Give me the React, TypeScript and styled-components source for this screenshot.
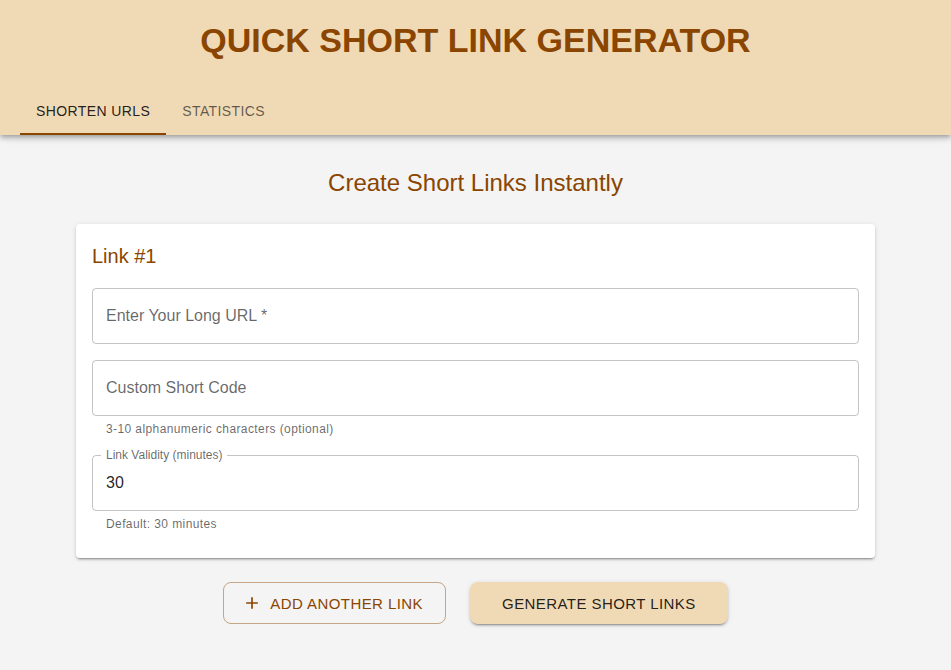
import React from "react";
import styled, { createGlobalStyle } from "styled-components";

const GlobalStyle = createGlobalStyle`
  * { box-sizing: border-box; }
  html, body { margin: 0; padding: 0; }
  body {
    background: #f4f4f4;
    font-family: "Liberation Sans", Arial, Helvetica, sans-serif;
    color: rgba(0,0,0,0.87);
  }
`;

const BROWN = "#8a4500";
const SAND = "#f0d9b5";

const Header = styled.header`
  background: ${SAND};
  box-shadow: 0px 2px 4px -1px rgba(0,0,0,0.2), 0px 4px 5px 0px rgba(0,0,0,0.14), 0px 1px 10px 0px rgba(0,0,0,0.12);
  position: relative;
  z-index: 1;
`;

const Title = styled.h1`
  margin: 0;
  height: 87px;
  padding-top: 20px;
  text-align: center;
  font-size: 34px;
  line-height: 40px;
  font-weight: 700;
  color: ${BROWN};
`;

const TabBar = styled.nav`
  display: flex;
  height: 48px;
  padding: 0 20px;
`;

const Tab = styled.div<{ $active?: boolean }>`
  display: flex;
  align-items: center;
  justify-content: center;
  padding: 0 16px;
  font-size: 14px;
  letter-spacing: 0.4px;
  text-transform: uppercase;
  color: ${(p) => (p.$active ? "rgba(0,0,0,0.87)" : "rgba(0,0,0,0.6)")};
  border-bottom: 2px solid ${(p) => (p.$active ? BROWN : "transparent")};
  padding-top: 2px;
`;

const Main = styled.main`
  padding: 32px 0 40px;
  display: flex;
  flex-direction: column;
  align-items: center;
`;

const Heading = styled.h2`
  margin: 0 0 25px;
  font-size: 24px;
  line-height: 32px;
  font-weight: 400;
  color: ${BROWN};
`;

const Card = styled.section`
  width: 799px;
  background: #fff;
  border-radius: 4px;
  padding: 16px 16px 24px;
  box-shadow: 0px 3px 1px -2px rgba(0,0,0,0.2), 0px 2px 2px 0px rgba(0,0,0,0.14), 0px 1px 5px 0px rgba(0,0,0,0.12);
  display: flex;
  flex-direction: column;
  gap: 16px;
`;

const CardTitle = styled.h3`
  margin: 0;
  font-size: 20px;
  line-height: 32px;
  font-weight: 400;
  color: ${BROWN};
`;

const FieldGroup = styled.div`
  display: flex;
  flex-direction: column;
`;

const FieldBox = styled.div`
  position: relative;
  height: 56px;
  border: 1px solid rgba(0,0,0,0.23);
  border-radius: 4px;
  display: flex;
  align-items: center;
`;

const FloatLabel = styled.span`
  position: absolute;
  top: -8px;
  left: 8px;
  padding: 0 5px;
  background: #fff;
  font-size: 12px;
  line-height: 15px;
  color: rgba(0,0,0,0.6);
`;

const Input = styled.input`
  width: 100%;
  border: 0;
  outline: none;
  background: transparent;
  padding: 0 13px;
  font-family: inherit;
  font-size: 16px;
  color: rgba(0,0,0,0.87);
  &::placeholder {
    color: rgba(0,0,0,0.6);
    opacity: 1;
  }
`;

const Helper = styled.p`
  margin: 3px 14px 0;
  font-size: 12px;
  line-height: 20px;
  letter-spacing: 0.4px;
  color: rgba(0,0,0,0.6);
`;

const Actions = styled.div`
  margin-top: 24px;
  display: flex;
  gap: 24px;
  justify-content: center;
`;

const OutlineButton = styled.button`
  display: inline-flex;
  align-items: center;
  height: 42px;
  padding: 0 22px;
  border: 1px solid rgba(138,69,0,0.45);
  border-radius: 8px;
  background: transparent;
  color: ${BROWN};
  font-family: inherit;
  font-size: 15px;
  letter-spacing: 0.43px;
  text-transform: uppercase;
  cursor: pointer;
  svg { margin: 0 8px 0 -4px; }
`;

const FilledButton = styled.button`
  display: inline-flex;
  align-items: center;
  height: 42px;
  padding: 0 32px;
  border: 0;
  border-radius: 8px;
  background: ${SAND};
  color: rgba(0,0,0,0.87);
  font-family: inherit;
  font-size: 15px;
  letter-spacing: 0.43px;
  text-transform: uppercase;
  cursor: pointer;
  box-shadow: 0px 3px 1px -2px rgba(0,0,0,0.2), 0px 2px 2px 0px rgba(0,0,0,0.14), 0px 1px 5px 0px rgba(0,0,0,0.12);
`;

const PlusIcon = () => (
  <svg width="20" height="20" viewBox="0 0 24 24" fill="currentColor">
    <path d="M19 13h-6v6h-2v-6H5v-2h6V5h2v6h6v2z" />
  </svg>
);

export default function App() {
  return (
    <>
      <GlobalStyle />
      <Header>
        <Title>QUICK SHORT LINK GENERATOR</Title>
        <TabBar>
          <Tab $active>Shorten URLs</Tab>
          <Tab>Statistics</Tab>
        </TabBar>
      </Header>
      <Main>
        <Heading>Create Short Links Instantly</Heading>
        <Card>
          <CardTitle>Link #1</CardTitle>
          <FieldGroup>
            <FieldBox>
              <Input placeholder="Enter Your Long URL *" />
            </FieldBox>
          </FieldGroup>
          <FieldGroup>
            <FieldBox>
              <Input placeholder="Custom Short Code" />
            </FieldBox>
            <Helper>3-10 alphanumeric characters (optional)</Helper>
          </FieldGroup>
          <FieldGroup>
            <FieldBox>
              <FloatLabel>Link Validity (minutes)</FloatLabel>
              <Input defaultValue="30" />
            </FieldBox>
            <Helper>Default: 30 minutes</Helper>
          </FieldGroup>
        </Card>
        <Actions>
          <OutlineButton>
            <PlusIcon />
            Add Another Link
          </OutlineButton>
          <FilledButton>Generate Short Links</FilledButton>
        </Actions>
      </Main>
    </>
  );
}
